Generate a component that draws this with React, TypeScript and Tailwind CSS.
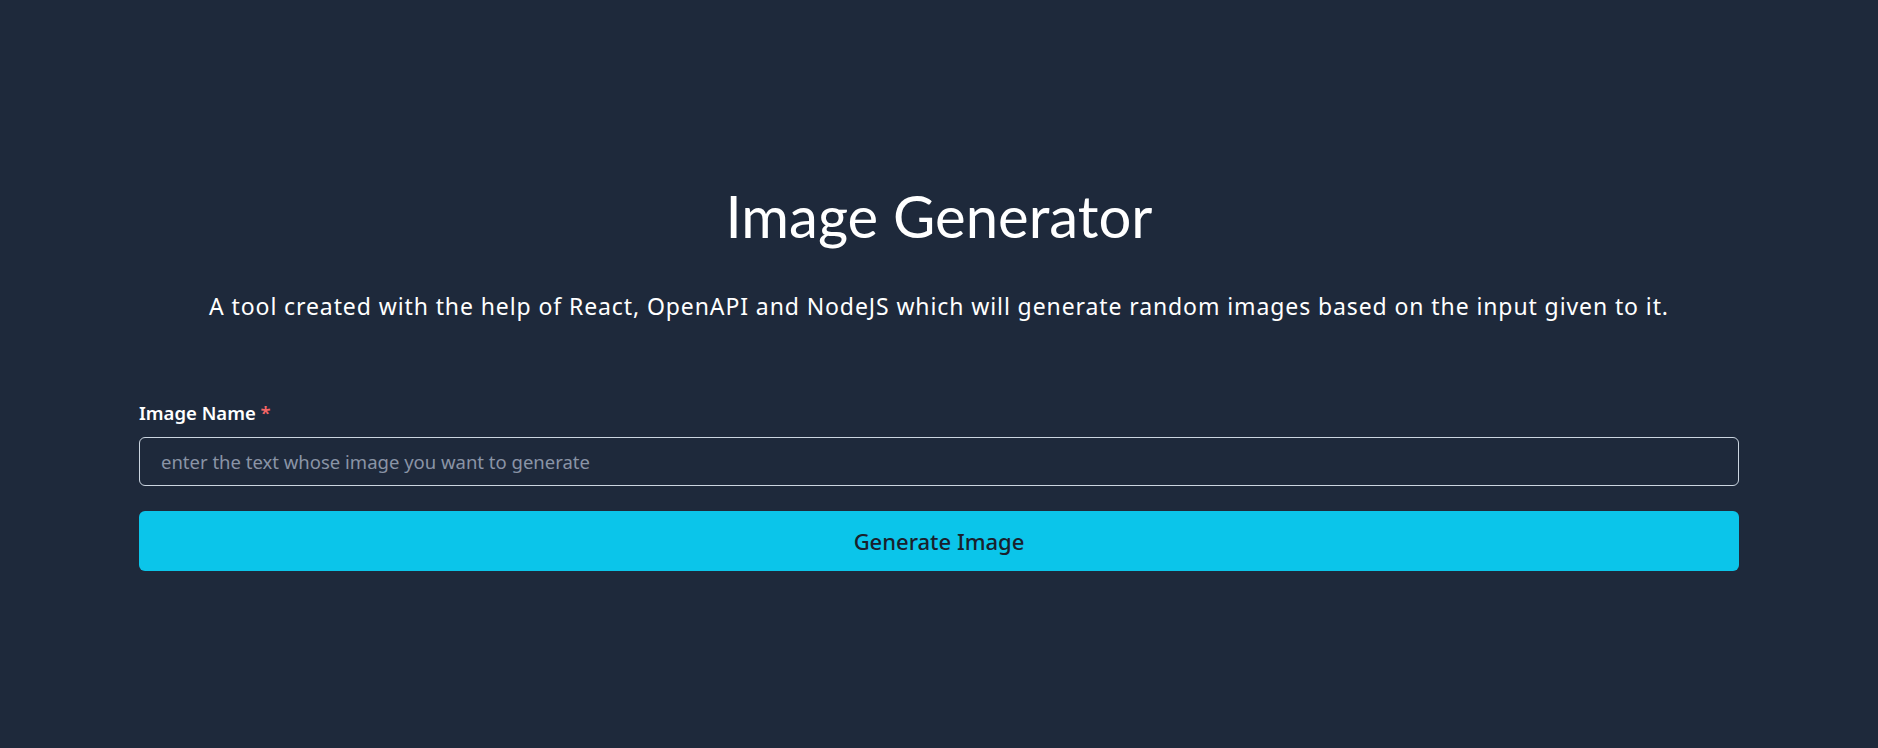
import React, { useState } from 'react';

const App: React.FC = () => {
  const [prompt, setPrompt] = useState('');

  return (
    <div className="min-h-screen w-full bg-[#1e293b] text-white">
      <div className="mx-auto max-w-[1600px] pt-[181px]">
        {/* Heading */}
        <h1 className="text-center font-['Lato',sans-serif] text-[58px] font-normal leading-[70px] text-white">
          Image Generator
        </h1>
        <p className="mt-[37px] text-center font-['Noto_Sans',sans-serif] text-[23px] leading-[36px] tracking-[0.9px] text-white">
          A tool created with the help of React, OpenAPI and NodeJS which will generate random images based on the input given to it.
        </p>

        {/* Form */}
        <form className="mt-[76px]" onSubmit={(e) => e.preventDefault()}>
          <label className="mb-[11px] block font-['Noto_Sans',sans-serif] text-[18.5px] font-semibold leading-[26px] text-white">
            Image Name <span className="text-[#f56565]">*</span>
          </label>
          <input
            value={prompt}
            onChange={(e) => setPrompt(e.target.value)}
            placeholder="enter the text whose image you want to generate"
            className="block h-[49px] w-full rounded-[6px] border border-[#cbd5e0] bg-transparent px-[21px] font-['Noto_Sans',sans-serif] text-[18.5px] text-white placeholder:text-[#8a94a6] outline-none"
          />
          <button
            type="submit"
            className="mt-[25px] flex h-[60px] w-full items-center justify-center rounded-[6px] bg-[#0bc5ea] font-['Noto_Sans',sans-serif] text-[22px] font-medium text-[#1a202c]"
          >
            Generate Image
          </button>
        </form>
      </div>
    </div>
  );
};

export default App;
